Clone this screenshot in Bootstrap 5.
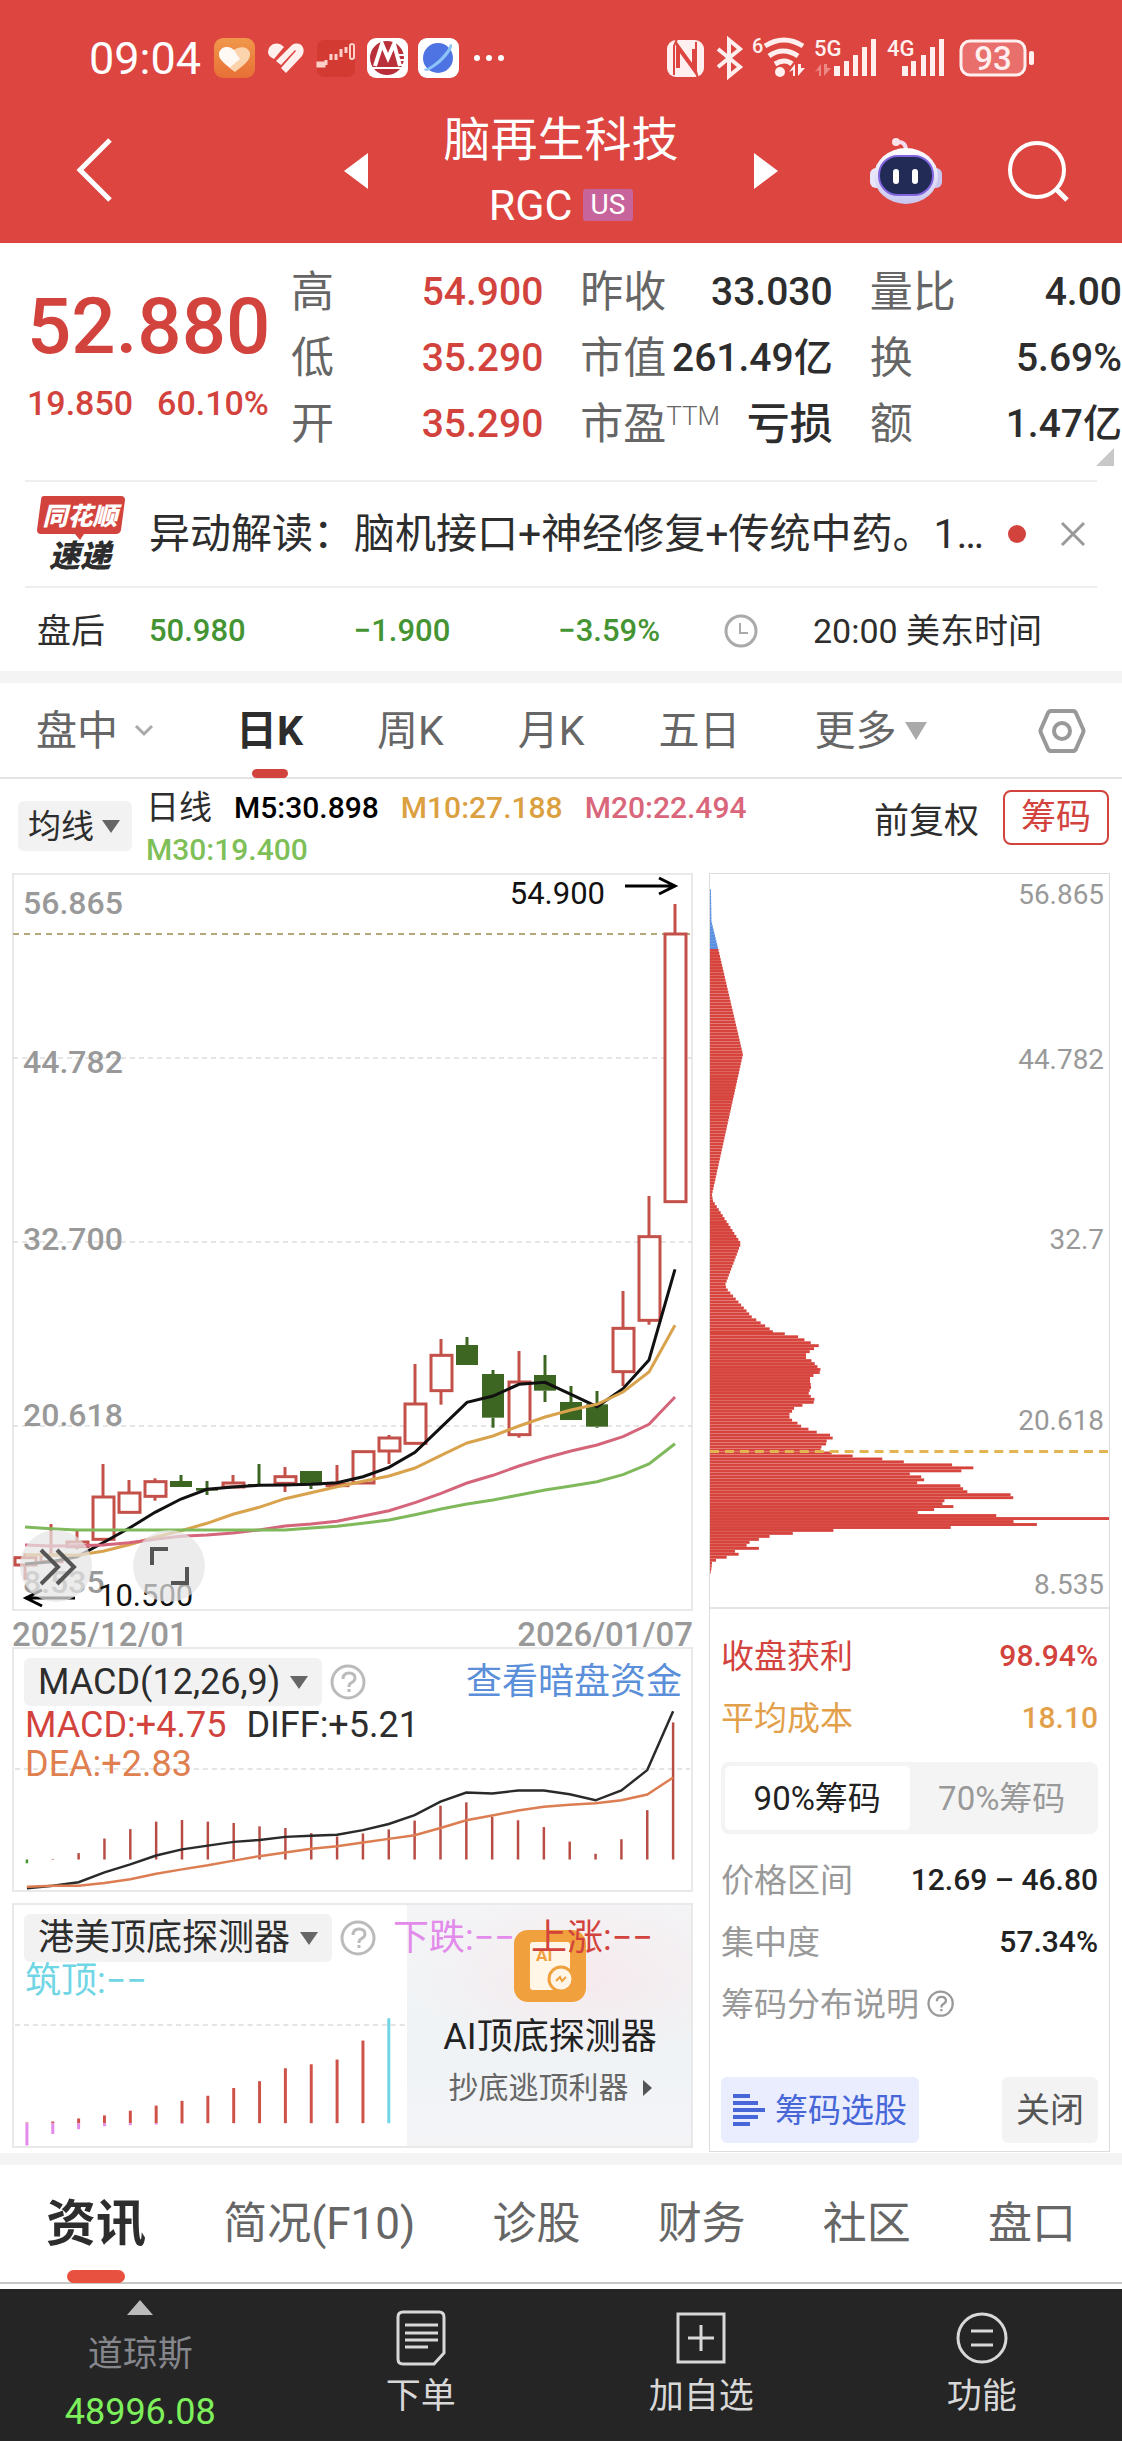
<!DOCTYPE html>
<html lang="zh-CN">
<head>
<meta charset="utf-8">
<meta name="viewport" content="width=device-width, initial-scale=1">
<title>脑再生科技 RGC</title>
<link href="https://cdn.jsdelivr.net/npm/bootstrap@5.3.0/dist/css/bootstrap.min.css" rel="stylesheet">
<style>
:root{--up:#d3433d;--down:#459433;--ink:#2d2d2d;--dim:#666;--pale:#999}
body{font-family:Roboto,"Noto Sans CJK SC",sans-serif;color:var(--ink);background:#fff;line-height:1}
a{color:inherit;text-decoration:none}
button{border:0;background:none;padding:0;color:inherit;line-height:1}
svg{display:block;flex:none}
.top-zone{background:#dc4540;color:#fff;height:243px}
.status-row{height:116px;padding:0 82px 0 89px}
.clock-text{font-size:45px}
.nav-row{height:110px}
.stock-name{font-size:47px;line-height:50px;margin-bottom:18px}
.stock-code{font-size:43px;line-height:44px;gap:10px}
.us-tag{background:#c8649c;font-size:28px;line-height:32px;padding:0 8px;border-radius:3px}
.quote-zone{height:237px;padding-top:16px}
.quote-left{width:291px;padding:19px 0 0 27px;color:var(--up);font-weight:500}
.big-price{font-size:78px;line-height:98px}
.chg-line{font-size:34px;line-height:54px;gap:24px}
.quote-cols{gap:37px}
.q-item{height:66px;font-size:43px;color:var(--dim)}
.q-item b{font-weight:500;font-size:39px;color:var(--ink)}
.q-item .up-txt{color:var(--up)}
.q-item .cjk-val{font-size:43px}
.ttm{font-size:26px;font-weight:300;align-self:flex-start;margin-top:12px}
.corner{right:8px;bottom:14px}
.news-row{height:108px;margin:0 25px;padding:0 9px 0 12px;border-top:2px solid #eee;border-bottom:2px solid #eee}
.news-text{font-size:41px;line-height:60px}
.dot{width:18px;height:18px;border-radius:50%;background:var(--up)}
.after-row{height:83px;padding:2px 0 0 37px;font-size:34px}
.after-row .fig{color:var(--down);font-size:31px;font-weight:500;margin-left:108px}
.after-row .fig-first{margin-left:44px}
.after-row svg{margin-left:64px}
.after-time{margin-left:55px}
.band{height:12px;background:#f4f4f4}
.k-tabs{height:96px;padding:2px 36px 0;gap:74px;font-size:41px;color:var(--dim);border-bottom:2px solid #e4e4e4}
.k-tabs .on,.info-tabs .on{color:var(--ink);font-weight:700;position:relative}
.k-tabs .on::after{content:"";position:absolute;left:50%;bottom:-26px;width:36px;height:9px;margin-left:-18px;border-radius:5px;background:var(--up)}
.legend-row{height:94px;padding:11px 13px 0 18px}
.pick{background:#f2f2f2;border-radius:6px;height:50px;color:var(--ink)}
.ma-btn{font-size:33px;padding:0 12px 0 10px;gap:8px;margin-top:11px}
.ma-list{font-size:30px;font-weight:500;line-height:42px;column-gap:22px;margin-left:14px;width:640px;margin-top:-3px}
.ma-name{font-size:33px}
.chip-btn{border:2px solid var(--up);border-radius:8px;color:var(--up);font-size:35px;height:55px;padding:0 16px}
.chart-area{padding:0 12px 5px 12px;gap:16px}
.col-k{flex:681 1 0;min-width:0}
.col-chip{flex:399 1 0;min-width:0;border:1px solid #dcdcdc;margin-bottom:-4px}
.dates{height:36px;font-size:33px;font-weight:500;color:var(--pale);line-height:48px}
.sub-panel{height:245px;border:2px solid #e9e9e9;overflow:hidden}
.sub-panel+.sub-panel{margin-top:11px}
.sub-panel>svg{position:absolute;inset:0;width:100%;height:100%}
.sub-head{padding:9px 9px 0 10px;height:57px;gap:8px}
.ind-btn{font-size:36px;height:48px;padding:0 14px;gap:10px;font-weight:400}
.vals{font-size:36px;line-height:39px;padding-left:11px;column-gap:20px}
.c-or{color:#e07f4f}.c-up{color:var(--up)}.c-pk{color:#e28bea}.c-cy{color:#70d6e5}.c-bl{color:#5b8fd9}
.link-txt{font-size:36px}
.ai-card{right:-2px;top:-2px;width:286px;height:245px;padding-top:27px;background:radial-gradient(ellipse 60% 35% at 62% 30%,#f6eaed,transparent),linear-gradient(#f4f4f6,#eff3f5 60%,#f4f4f7)}
.ai-name{font-size:36px;line-height:40px;margin-top:15px;color:#222}
.ai-note{font-size:30px;line-height:40px;margin-top:11px;color:#666;gap:14px}
.z-up{z-index:2}
.hist{border-bottom:2px solid #e4e4e4}
.stat-list{padding:16px 11px 0 11px}
.s-item{height:62px;font-size:33px;color:var(--pale)}
.s-item b{font-weight:500;font-size:30px;color:#222}
.s-item.c-up,.s-item.c-up b{color:#d3433d}
.s-item.c-gd,.s-item.c-gd b{color:#e3a04a}
.seg{background:#f4f4f4;border-radius:8px;padding:4px;height:72px;margin:13px 0 15px;font-size:33px;color:var(--pale)}
.seg button.on{background:#fff;border-radius:5px;color:#222}
.foot-btns{margin-top:42px}
.foot-btns button{height:66px;border-radius:6px}
.sel-btn{background:#e9edfd;color:#4766d8;font-size:33px;padding:0 12px;gap:10px}
.close-btn{background:#f3f3f3;color:#555;font-size:34px;padding:0 14px}
.info-tabs{height:119px;padding:0 46px;font-size:44px;color:var(--dim);border-bottom:2px solid #c8c8c8}
.info-tabs .on{font-size:50px}
.info-tabs .on::after{content:"";position:absolute;left:50%;bottom:-34px;width:58px;height:13px;margin-left:-29px;border-radius:7px;background:#e8503f}
.foot-bar{margin-top:5px;height:152px;background:#252525;color:#d8d8d8;font-size:35px}
.foot-bar a{flex:1 1 0;padding-top:21px;gap:13px}
.foot-bar a:first-child{padding-top:11px;color:#85878d;gap:22px}
.idx-val{color:#7df05c;font-size:36px}
</style>
</head>
<body>
<header class="top-zone">
  <div class="status-row d-flex align-items-center justify-content-between">
    <div class="d-flex align-items-center">
      <span class="clock-text me-2">09:04</span>
      <svg width="296" height="42" viewBox="0 0 296 42">
        <defs><linearGradient id="og" x2="0" y2="1"><stop stop-color="#f0984a"/><stop offset="1" stop-color="#e86f36"/></linearGradient></defs>
        <rect x="5" y="1" width="41" height="40" rx="9" fill="url(#og)"/>
        <path d="M26 35C18 28 9 23 10 16c2-7 10-8 15-3 5-4 14-4 16 3 1 8-8 13-15 19z" fill="#fbd3ac"/><path d="M26 35C18 28 9 23 10 16c2-7 10-8 15-3l6 9-10 8z" fill="#fff" opacity=".85"/>
        <g fill="#fff0ee"><path d="M59 15c1-9 10-11 16-5L65 22c-4-2-6-4-6-7z"/><path d="M67 24L83 8c8-5 15 3 10 11L77 36l-5-5 15-17-1-1-14 15z"/></g>
        <path d="M71 28l6 6M66 24l14-13" stroke="#dc4540" stroke-width="2" opacity=".0"/>
        <rect x="108" y="3" width="38" height="37" rx="7" fill="#d33a32"/>
        <path d="M109 26h6v3h-6zM117 28v-5M122 23v-6M127 23v-6M132 20v-8M137 16v-6" stroke="#ffd0c8" stroke-width="3" fill="none"/><rect x="141" y="7" width="4" height="15" rx="2" fill="none" stroke="#ffd0c8" stroke-width="2"/>
        <rect x="158" y="1" width="41" height="40" rx="9" fill="#fff"/><circle cx="178" cy="21" r="17" fill="#b9303a"/><path d="M166 29l7-22 6 14 6-14 6 22" fill="none" stroke="#fff" stroke-width="4"/><path d="M163 31h30M188 18h10M189 23h9M190 28h8" stroke="#fff" stroke-width="2"/>
        <rect x="209" y="1" width="41" height="40" rx="9" fill="#fff"/><circle cx="229" cy="21" r="15" fill="#4e74e4"/><path d="M241 7c6 0-2 12-9 18s-16 12-17 7c6 0 24-16 26-25z" fill="#8cc4f8"/>
        <g fill="#fff"><circle cx="268" cy="21" r="3"/><circle cx="280" cy="21" r="3"/><circle cx="292" cy="21" r="3"/></g>
      </svg>
    </div>
    <svg width="376" height="72" viewBox="664 22 376 72" fill="#fff0ef">
      <rect x="667" y="40" width="37" height="37" rx="9"/><path d="M678 68V47l16 22V49" fill="none" stroke="#dc4540" stroke-width="4"/><path d="M677 39l-3 7v29M698 79l-2-8V42" stroke="#dc4540" stroke-width="2" fill="none"/>
      <path d="M718 49l22 18-11 9V40l11 9-22 18" fill="none" stroke="#fff0ef" stroke-width="4"/>
      <text x="752" y="53" font-size="20" font-weight="500">6</text>
      <g fill="none" stroke="#fff0ef" stroke-width="5"><path d="M765 46q19-12 38 0M769 56q14-10 29 0M775 64q10-6 17 0"/></g><circle cx="780" cy="72" r="5"/>
      <path d="M789 72l6-8v12h-2v-6zM798 64v12l7-8h-4v-4z"/>
      <text x="814" y="56" font-size="22" font-weight="500">5G</text>
      <path d="M815 72l6-8v12h-2v-6zM824 64v12l7-8h-4v-4z" opacity=".4"/>
      <path d="M834 66h6v10h-6zM844 61h5v15h-5zM853 55h5v21h-5zM862 47h5v29h-5zM871 39h5v37h-5z"/>
      <text x="887" y="56" font-size="22" font-weight="500">4G</text>
      <path d="M902 66h6v10h-6zM911 61h5v15h-5zM921 55h5v21h-5zM930 47h5v29h-5zM939 39h5v37h-5z"/>
      <rect x="961" y="41" width="64" height="34" rx="9" fill="#e86f6b" stroke="#fff0ef" stroke-width="3"/>
      <rect x="1029" y="51" width="5" height="14" rx="2"/>
      <text x="993" y="70" font-size="33" font-weight="500" text-anchor="middle">93</text>
    </svg>
  </div>
  <nav class="nav-row d-flex align-items-center">
    <div class="col ps-5"><button class="ms-4 ps-1" aria-label="返回"><svg width="38" height="64" viewBox="0 0 38 64"><path d="M34 2L4 32l30 30" fill="none" stroke="#fff" stroke-width="5"/></svg></button></div>
    <button aria-label="上一只"><svg width="24" height="36"><path d="M24 0v36L0 18z" fill="#fff"/></svg></button>
    <div class="text-center" style="width:386px">
      <div class="stock-name">脑再生科技</div>
      <div class="stock-code d-flex justify-content-center align-items-center"><span>RGC</span><span class="us-tag">US</span></div>
    </div>
    <button aria-label="下一只"><svg width="24" height="36"><path d="M0 0v36l24-18z" fill="#fff"/></svg></button>
    <div class="col d-flex align-items-center justify-content-end pe-5">
      <button class="me-5" aria-label="智能助手"><svg class="me-3" width="72" height="68" viewBox="0 0 72 68"><defs><linearGradient id="rb" x2="0" y2="1"><stop stop-color="#fff"/><stop offset="1" stop-color="#c9c6f0"/></linearGradient></defs><path d="M27 5q9-1 9 9" fill="none" stroke="#f4dcf0" stroke-width="4"/><circle cx="26" cy="5" r="4" fill="#fbe3ea"/><rect x="0" y="31" width="14" height="20" rx="6" fill="#e8e6fa"/><rect x="58" y="31" width="14" height="20" rx="6" fill="#c9c6f0"/><ellipse cx="36" cy="39" rx="32" ry="28" fill="url(#rb)"/><rect x="9" y="19" width="54" height="39" rx="19" fill="#222b55" stroke="#8365e0" stroke-width="2"/><rect x="23" y="32" width="6" height="15" rx="3" fill="#fff"/><rect x="42" y="32" width="6" height="15" rx="3" fill="#fff"/></svg></button>
      <button class="me-1" aria-label="搜索"><svg width="64" height="64" viewBox="0 0 64 64"><circle cx="31" cy="31" r="27" fill="none" stroke="#fff" stroke-width="4"/><path d="M50 50l11 11" stroke="#fff" stroke-width="5"/></svg></button>
    </div>
  </nav>
</header>

<main>
<section class="quote-zone d-flex position-relative">
  <div class="quote-left">
    <div class="big-price">52.880</div>
    <div class="chg-line d-flex"><span>19.850</span><span>60.10%</span></div>
  </div>
  <div class="quote-cols d-flex flex-fill">
    <div class="col">
      <div class="q-item d-flex align-items-center justify-content-between">高<b class="up-txt">54.900</b></div>
      <div class="q-item d-flex align-items-center justify-content-between">低<b class="up-txt">35.290</b></div>
      <div class="q-item d-flex align-items-center justify-content-between">开<b class="up-txt">35.290</b></div>
    </div>
    <div class="col">
      <div class="q-item d-flex align-items-center justify-content-between">昨收<b>33.030</b></div>
      <div class="q-item d-flex align-items-center justify-content-between">市值<b>261.49亿</b></div>
      <div class="q-item d-flex align-items-center"><span>市盈</span><span class="ttm">TTM</span><b class="cjk-val ms-auto">亏损</b></div>
    </div>
    <div class="col">
      <div class="q-item d-flex align-items-center justify-content-between">量比<b>4.00</b></div>
      <div class="q-item d-flex align-items-center justify-content-between">换<b>5.69%</b></div>
      <div class="q-item d-flex align-items-center justify-content-between">额<b>1.47亿</b></div>
    </div>
  </div>
  <svg class="corner position-absolute" width="18" height="18"><path d="M18 0v18H0z" fill="#c8c8c8"/></svg>
</section>

<section class="news-row d-flex align-items-center">
  <svg width="88" height="76" viewBox="0 0 88 76"><path d="M7 0h77q4 0 4 4l-4 30q-1 4-5 4H47l-4 6-5-6H4q-4 0-4-4L4 4q0-4 3-4z" fill="#d3433d"/><g font-weight="900" font-style="italic" text-anchor="middle"><text x="43" y="29" font-size="25" fill="#fff">同花顺</text><text x="43" y="71" font-size="31" fill="#2d2d2d">速递</text></g></svg>
  <a href="#" class="news-text col text-truncate ms-4 me-3">异动解读：脑机接口+神经修复+传统中药。10:35 盘中异动拉升</a>
  <span class="dot ms-1 me-4"></span>
  <button class="ms-2" aria-label="关闭提示"><svg width="30" height="30" viewBox="0 0 30 30"><path d="M4 4l22 22M26 4L4 26" stroke="#999" stroke-width="3"/></svg></button>
</section>

<section class="after-row d-flex align-items-center">
  <span>盘后</span><span class="fig fig-first">50.980</span><span class="fig">−1.900</span><span class="fig">−3.59%</span>
  <svg width="34" height="34" viewBox="0 0 34 34" fill="none" stroke="#aaa"><circle cx="17" cy="17" r="15" stroke-width="3"/><path d="M16 9v10h8" stroke-width="2"/></svg>
  <span class="after-time">20:00 美东时间</span>
</section>
<div class="band"></div>

<nav class="k-tabs d-flex align-items-center">
  <a href="#" class="d-flex align-items-center gap-3 me-2">盘中<svg width="20" height="14"><path d="M2 2l8 8 8-8" fill="none" stroke="#aaa" stroke-width="3"/></svg></a>
  <a href="#" class="on">日K</a><a href="#">周K</a><a href="#">月K</a><a href="#">五日</a>
  <a href="#" class="d-flex align-items-center gap-2">更多<svg width="22" height="18"><path d="M0 0h22L11 18z" fill="#aaa"/></svg></a>
  <button class="ms-auto" aria-label="设置"><svg width="48" height="46" viewBox="0 0 48 46" fill="none" stroke="#999" stroke-width="4"><path d="M13 3h22q2 0 3 2l7 16q1 2 0 4l-7 16q-1 2-3 2H13q-2 0-3-2L3 25q-1-2 0-4l7-16q1-2 3-2z"/><circle cx="24" cy="23" r="8"/></svg></button>
</nav>

<section class="legend-row d-flex align-items-start">
  <button class="pick ma-btn d-flex align-items-center">均线<svg width="18" height="13"><path d="M0 0h18L9 13z" fill="#666"/></svg></button>
  <div class="ma-list d-flex flex-wrap"><span class="ma-name fw-normal">日线</span><span class="text-black">M5:30.898</span><span style="color:#dba040">M10:27.188</span><span style="color:#d9667a">M20:22.494</span><span style="color:#7fbf58">M30:19.400</span></div>
  <div class="ms-auto d-flex align-items-center gap-4"><span class="mt-2" style="font-size:35px">前复权</span><button class="chip-btn">筹码</button></div>
</section>

<section class="chart-area d-flex">
  <div class="col-k">
    <svg id="kline" class="w-100" viewBox="12 873 681 738"></svg>
    <div class="dates d-flex justify-content-between"><span>2025/12/01</span><span>2026/01/07</span></div>
    <div class="sub-panel position-relative">
      <svg id="macd" viewBox="12 1647 681 245" preserveAspectRatio="none"></svg>
      <div class="sub-head d-flex align-items-center position-relative">
        <button class="pick ind-btn d-flex align-items-center">MACD(12,26,9)<svg width="18" height="13"><path d="M0 0h18L9 13z" fill="#666"/></svg></button>
        <button aria-label="指标说明"><svg width="37" height="37" viewBox="0 0 37 37"><circle cx="18" cy="18" r="16" fill="none" stroke="#bbb" stroke-width="3"/><path d="M13 15q0-6 6-6t6 5q0 3-4 5-2 1-2 4M19 25v3" fill="none" stroke="#bbb" stroke-width="3"/></svg></button>
        <a href="#" class="link-txt c-bl ms-auto">查看暗盘资金</a>
      </div>
      <div class="vals d-flex flex-wrap position-relative w-75"><span class="c-up">MACD:+4.75</span><span>DIFF:+5.21</span><span class="c-or">DEA:+2.83</span></div>
    </div>
    <div class="sub-panel position-relative">
      <svg id="detect" viewBox="12 1903 681 245" preserveAspectRatio="none"></svg>
      <a href="#" class="ai-card position-absolute d-flex flex-column align-items-center">
        <svg width="72" height="72" viewBox="0 0 72 72"><rect width="72" height="72" rx="14" fill="#f0a03c"/><rect x="16" y="12" width="40" height="48" rx="3" fill="#fff6e8"/><text x="22" y="31" font-size="17" font-weight="700" fill="#f0a03c">AI</text><circle cx="47" cy="49" r="12" fill="#fff6e8" stroke="#f0a03c" stroke-width="3"/><path d="M42 51l4-4 2 4 4-4" fill="none" stroke="#f0a03c" stroke-width="2"/></svg>
        <span class="ai-name">AI顶底探测器</span>
        <span class="ai-note d-flex align-items-center">抄底逃顶利器<svg width="9" height="16"><path d="M0 0l9 8-9 8z" fill="#555"/></svg></span>
      </a>
      <div class="sub-head d-flex align-items-center position-relative z-up">
        <button class="pick ind-btn d-flex align-items-center">港美顶底探测器<svg width="18" height="13"><path d="M0 0h18L9 13z" fill="#666"/></svg></button>
        <button aria-label="指标说明"><svg width="37" height="37" viewBox="0 0 37 37"><circle cx="18" cy="18" r="16" fill="none" stroke="#bbb" stroke-width="3"/><path d="M13 15q0-6 6-6t6 5q0 3-4 5-2 1-2 4M19 25v3" fill="none" stroke="#bbb" stroke-width="3"/></svg></button>
        <span class="link-txt c-pk ms-2 me-2">下跌:−−</span><span class="link-txt c-up">上涨:−−</span>
      </div>
      <div class="vals c-cy position-relative w-50">筑顶:−−</div>
    </div>
  </div>

  <div class="col-chip">
    <svg id="chips" class="w-100 hist" viewBox="709 873 400 735"></svg>
    <div class="stat-list">
      <div class="s-item c-up d-flex align-items-center justify-content-between">收盘获利<b>98.94%</b></div>
      <div class="s-item c-gd d-flex align-items-center justify-content-between">平均成本<b>18.10</b></div>
      <div class="seg d-flex"><button class="on col">90%筹码</button><button class="col">70%筹码</button></div>
      <div class="s-item d-flex align-items-center justify-content-between">价格区间<b>12.69 – 46.80</b></div>
      <div class="s-item d-flex align-items-center justify-content-between">集中度<b>57.34%</b></div>
      <div class="s-item d-flex align-items-center gap-2">筹码分布说明<svg width="28" height="28" viewBox="0 0 37 37"><circle cx="18" cy="18" r="16" fill="none" stroke="#999" stroke-width="3"/><path d="M13 15q0-6 6-6t6 5q0 3-4 5-2 1-2 4M19 25v3" fill="none" stroke="#999" stroke-width="3"/></svg></div>
      <div class="foot-btns d-flex justify-content-between">
        <button class="sel-btn d-flex align-items-center"><svg width="32" height="32"><path d="M0 2h17M0 9h25M0 16h32M0 23h25M0 30h17" stroke="#4766d8" stroke-width="4"/></svg>筹码选股</button>
        <button class="close-btn">关闭</button>
      </div>
    </div>
  </div>
</section>
<div class="band"></div>

<nav class="info-tabs d-flex align-items-center justify-content-between">
  <a href="#" class="on">资讯</a><a href="#">简况(F10)</a><a href="#">诊股</a><a href="#">财务</a><a href="#">社区</a><a href="#">盘口</a>
</nav>
</main>

<footer class="foot-bar d-flex">
  <a href="#" class="d-flex flex-column align-items-center"><svg width="26" height="15"><path d="M0 15h26L13 0z" fill="#bbb"/></svg><span>道琼斯</span><span class="idx-val">48996.08</span></a>
  <a href="#" class="d-flex flex-column align-items-center"><svg width="50" height="56" viewBox="0 0 50 56" fill="none" stroke="#d8d8d8" stroke-width="3"><path d="M7 2h36q5 0 5 5v36L38 54H7q-5 0-5-5V7q0-5 5-5z"/><path d="M9 15h33M9 23h33M9 30h33M9 37h23"/></svg><span>下单</span></a>
  <a href="#" class="d-flex flex-column align-items-center"><svg width="50" height="56" viewBox="0 0 50 56" fill="none" stroke="#d8d8d8" stroke-width="3"><path d="M2 4h46v48H2zM12 28h26M25 15v26"/></svg><span>加自选</span></a>
  <a href="#" class="d-flex flex-column align-items-center"><svg width="52" height="56" viewBox="0 0 52 56" fill="none" stroke="#d8d8d8" stroke-width="3"><circle cx="26" cy="28" r="24"/><path d="M15 21h22M15 35h22"/></svg><span>功能</span></a>
</footer>

<script src="https://cdn.jsdelivr.net/npm/bootstrap@5.3.0/dist/js/bootstrap.bundle.min.js"></script>
<script>
const X = k => 25 + 26 * k, UP = '#c4504a', DN = '#3d6623';
const line = (ys, f, c, w) => `<polyline points="${ys.map((y, k) => X(k) + ',' + f(y).toFixed(1)).join(' ')}" fill="none" stroke="${c}" stroke-width="${w}"/>`;
const bar = (x, a, b, c, w) => `<path d="M${x} ${a.toFixed(1)}V${b.toFixed(1)}" stroke="${c}" stroke-width="${w}"/>`;
const dash = (x1, x2, y, c, d, w) => `<path d="M${x1} ${y}H${x2}" stroke="${c}" stroke-width="${w}" stroke-dasharray="${d}"/>`;
const label = (x, y, t, s, c, w, a) => `<text x="${x}" y="${y}" font-size="${s}" fill="${c}" font-weight="${w}" text-anchor="${a || 'start'}">${t}</text>`;

/* daily candles: [rising, wick top, body top, body bottom, wick bottom] */
const K = [[1,880,893,915,960],[1,792,885,905,910],[1,813,846,860,868],[1,612,711,838,840],[1,660,699,757,758],[1,655,665,709,722],[0,645,663,681,681],[0,663,684,692,705],[1,645,669,681,682],[0,612,672,678,678],[1,621,650,670,696],[0,633,633,676,687],[1,615,672,677,677],[1,574,575,669,670],[1,525,534,573,612],[1,312,432,550,552],[1,237,286,392,434],[0,231,255,315,315],[0,330,342,473,503],[1,273,366,524,533],[0,285,345,392,426],[0,378,426,480,480],[0,393,433,500,503],[1,93,205,335,378],[1,-192,-70,181,194],[1,-1068,-978,-175,-175]];
const py = v => 1260 + v / 3;
let s = '<rect x="13" y="874" width="679" height="736" fill="none" stroke="#e9e9e9" stroke-width="2"/>';
[1058, 1242, 1426].forEach(y => s += dash(13, 692, y, '#ddd', '5 4', 1.5));
[[914,'56.865'],[1073,'44.782'],[1250,'32.700'],[1426,'20.618'],[1593,'8.535']].forEach(a => s += label(23, a[0], a[1], 32, '#999', 500));
s += dash(13, 692, 934, '#b5a878', '6 5', 2);
K.forEach((c, k) => {
  const x = X(k), [r, a, b, d, e] = c, col = r ? UP : DN;
  s += bar(x, py(a), py(b), col, 3) + bar(x, py(d), py(e), col, 3);
  s += r ? `<rect x="${x - 10}" y="${py(b)}" width="21" height="${Math.max(1, (d - b) / 3)}" fill="#fff" stroke="${col}" stroke-width="3"/>` : `<rect x="${x - 11}" y="${py(b)}" width="22" height="${Math.max(2, (d - b) / 3)}" fill="${col}"/>`;
});
s += line([912,905,890,848,805,757,717,688,681,676,675,673,668,650,622,577,502,427,408,373,367,403,440,386,300,28], py, '#111', 3);
s += line([884,884,886,874,854,832,812,790,763,742,716,698,680,664,648,624,586,549,528,498,471,450,433,396,336,196], py, '#d9a24c', 3);
s += line([855,858,857,855,848,838,829,825,819,810,798,792,784,768,752,728,700,669,646,618,594,573,555,530,493,411], py, '#d4657a', 3);
s += line([801,806,810,810,810,810,810,810,810,810,810,804,799,790,780,764,747,732,720,705,690,678,665,644,612,551], py, '#80b95c', 3);
s += label(605, 904, '54.900', 31, '#111', 400, 'end') + '<path d="M625 886h50M659 878l16 8-16 8" fill="none" stroke="#000" stroke-width="3"/>';
s += label(98, 1606, '10.500', 31, '#111', 400) + '<path d="M75 1598H25M42 1590l-16 8 16 8" fill="none" stroke="#000" stroke-width="3"/>';
s += '<circle cx="56" cy="1566" r="36" fill="#e4e4e4" opacity=".72"/><circle cx="169" cy="1566" r="36" fill="#e4e4e4" opacity=".72"/>';
s += '<path d="M41 1550l17 17-17 17M57 1550l17 17-17 17M152 1565v-16h16M187 1567v16h-16" fill="none" stroke="#555" stroke-width="4"/>';
document.getElementById('kline').innerHTML = s;

/* MACD */
const my = v => 1620 + v / 2.904;
s = dash(13, 692, 1769, '#e4e4e4', '5 4', 2);
[711,698,681,638,610,588,583,588,592,602,607,622,632,623,611,585,541,531,574,584,604,647,683,640,554,295].forEach((v, k) => s += bar(X(k), my(v), my(700), k ? '#b84d45' : '#459433', 2.5));
s += line([785,777,767,738,714,688,670,659,648,642,633,630,627,613,595,569,529,502,505,496,496,507,525,496,436,262], my, '#2a2a2a', 2.5);
s += line([780,777,777,769,758,742,729,717,703,690,679,668,661,650,639,628,607,584,570,555,544,538,534,525,508,458], my, '#dc7d52', 2.5);
document.getElementById('macd').innerHTML = s;

/* top/bottom detector: [top, bottom] around the zero line */
s = dash(13, 406, 2025, '#e4e4e4', '5 4', 2);
[[1464,1532],[1461,1498],[1452,1484],[1443,1475],[1429,1472],[1414,1470],[1400,1468],[1385,0],[1362,0],[1342,0],[1304,0],[1292,0],[1278,0],[1222,0],[1156,0]].forEach((v, k) => {
  s += bar(X(k), my(v[0]), my(1466), k == 14 ? '#70d6e5' : '#cf5249', 3);
  if (v[1]) s += bar(X(k), my(1466), my(v[1]), '#e28bea', 3);
});
document.getElementById('detect').innerHTML = s;

/* chip distribution, one bar per price step */
const shape = [[64,1],[127,1.5],[182,8],[402,33],[692,2],[705,3],[793,31],[880,15],[890,18],[945,42],[974,63]];
const dense = [282,322,341,360,384,370,357,346,346,362,372,380,389,387,368,358,358,360,361,357,354,360,371,369,335,310,304,296,296,304,320,331,353,378,418,426,408,406,392,390,423,486,575,640,785,849,813,658,692,701,680,810,818,831,961,969,762,756,789,731,682,918,1257,970,1040,781,428,306,236,204,176,167,204,132,143,107,75,63,62,61,59];
s = '';
for (let i = 1, y = 64; y < 978; y += 6.16) {
  while (i < shape.length - 1 && shape[i][0] < y) i++;
  const [y0, w0] = shape[i - 1], [y1, w1] = shape[i];
  const w = w0 + (w1 - w0) * Math.min(1, (y - y0) / (y1 - y0));
  s += `<rect x="709" y="${(859 + y / 2.063 - 1.5).toFixed(1)}" width="${w.toFixed(1)}" height="2.9" fill="${y < 182 ? '#5b8fe0' : '#d6443d'}"/>`;
}
dense.forEach((v, i) => s += `<rect x="709" y="${(1332.5 + i * 2.987).toFixed(1)}" width="${((v - 57) / 3).toFixed(1)}" height="2.9" fill="#d6443d"/>`);
s += dash(709, 1109, 1452, '#e3b552', '9 6', 3);
[[903,'56.865'],[1068,'44.782'],[1249,'32.7'],[1430,'20.618'],[1595,'8.535']].forEach(a => s += label(1104, a[0], a[1], 28, '#999', 400, 'end'));
document.getElementById('chips').innerHTML = s;
</script>
</body>
</html>
